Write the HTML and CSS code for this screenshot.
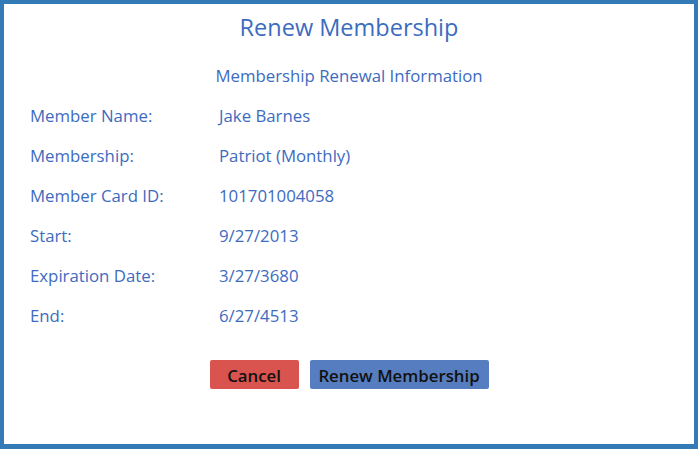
FILE: index.html
```html
<!DOCTYPE html>
<html lang="en">

<head>
    <meta charset="UTF-8">
    <meta name="viewport" content="width=device-width, initial-scale=1.0">
    <title>Renew Membership</title>
    <link rel="stylesheet" href="styles.css">
</head>

<body>
    <div class="dialog">
        <h1 class="title">Renew Membership</h1>
        <h2 class="subtitle">Membership Renewal Information</h2>
        <!-- 会员信息 -->
        <dl class="info">
            <dt>Member Name:</dt>
            <dd>Jake Barnes</dd>
            <dt>Membership:</dt>
            <dd>Patriot (Monthly)</dd>
            <dt>Member Card ID:</dt>
            <dd>101701004058</dd>
            <dt>Start:</dt>
            <dd>9/27/2013</dd>
            <dt>Expiration Date:</dt>
            <dd>3/27/3680</dd>
            <dt>End:</dt>
            <dd>6/27/4513</dd>
        </dl>
        <!-- 按钮 -->
        <div class="actions">
            <a href="javascript:;" class="btn btn-cancel">Cancel</a>
            <a href="javascript:;" class="btn btn-renew">Renew Membership</a>
        </div>
    </div>
</body>

</html>
```

FILE: styles.css
```css
* {
    margin: 0;
    padding: 0;
    box-sizing: border-box;
}

a {
    text-decoration: none;
}

body {
    font-family: "Open Sans", "Noto Sans", sans-serif;
    color: #3d6bbf;
    background: #fff;
}

.dialog {
    width: 698px;
    height: 449px;
    border: 4px solid #337ab7;
    border-bottom-width: 5px;
    padding-top: 7px;
}

.title {
    font-size: 23.5px;
    font-weight: normal;
    line-height: 32px;
    text-align: center;
}

.subtitle {
    margin-top: 21px;
    font-size: 16.8px;
    font-weight: normal;
    line-height: 24px;
    text-align: center;
}

.info {
    display: grid;
    grid-template-columns: 189px auto;
    margin-top: 8px;
    padding-left: 26px;
    font-size: 16.8px;
    line-height: 40px;
}

.actions {
    display: flex;
    justify-content: center;
    gap: 11px;
    margin-top: 24px;
}

.btn {
    display: block;
    height: 29px;
    line-height: 32px;
    border-radius: 2px;
    font-size: 16.8px;
    font-weight: 600;
    text-align: center;
    white-space: nowrap;
    color: #111;
}

.btn-cancel {
    width: 89px;
    background: #d9534f;
}

.btn-renew {
    width: 179px;
    background: #567dbf;
}
```
